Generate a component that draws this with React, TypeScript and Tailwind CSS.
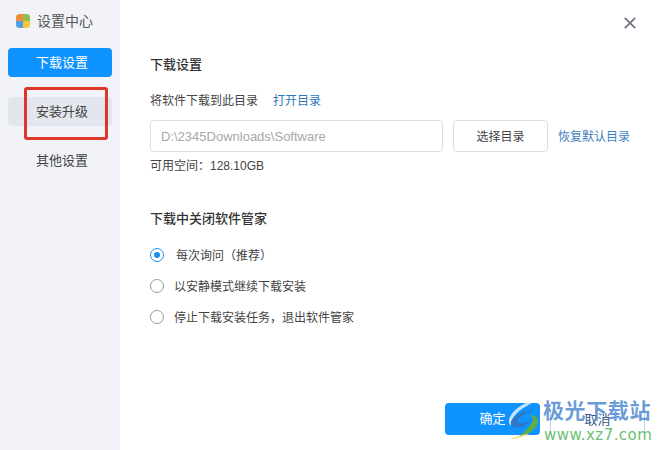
function Radio({ checked, label, gap }: { checked?: boolean; label: string; gap: string }) {
  return (
    <div className={`flex items-center h-[16px] ${gap}`}>
      {checked ? (
        <span className="w-[14px] h-[14px] rounded-full border border-[#1b8ff0] flex items-center justify-center shrink-0">
          <span className="w-[6px] h-[6px] rounded-full bg-[#1b8ff0]" />
        </span>
      ) : (
        <span className="w-[14px] h-[14px] rounded-full border border-[#9a9a9a] shrink-0" />
      )}
      <span className="text-[12px] text-[#444] pt-[2px]">{label}</span>
    </div>
  );
}

export default function App() {
  return (
    <div className="relative w-[660px] h-[450px] flex overflow-hidden bg-white font-['Liberation_Sans','Noto_Sans_CJK_SC',sans-serif]">
      <div className="w-[120px] shrink-0 bg-[#f1f3f9] px-[8px] pt-[12px]">
        <div className="flex items-center h-[16px] pl-[8px] gap-[7px]">
          <svg width="14" height="14" viewBox="0 0 14 14" className="mt-[2px]">
            <defs>
              <clipPath id="logo-clip">
                <rect width="14" height="14" rx="3.5" />
              </clipPath>
            </defs>
            <g clipPath="url(#logo-clip)">
              <rect width="7" height="7" fill="#f08a3c" />
              <rect x="7" width="7" height="7" fill="#8cc152" />
              <rect y="7" width="7" height="7" fill="#4aa3e8" />
              <rect x="7" y="7" width="7" height="7" fill="#f8c63d" />
            </g>
          </svg>
          <span className="text-[14px] text-[#555] pt-[2px] whitespace-nowrap">设置中心</span>
        </div>
        <div className="mt-[20px] flex flex-col gap-[20px]">
          <div className="h-[29px] pt-[1px] pl-[4px] rounded-[4px] bg-[#0f93ff] text-white text-[13px] flex items-center justify-center">下载设置</div>
          <div className="h-[29px] pt-[1px] pl-[4px] rounded-[4px] bg-[#e3e6ec] text-[#444] text-[13px] flex items-center justify-center">安装升级</div>
          <div className="h-[29px] pt-[1px] pl-[4px] text-[#444] text-[13px] flex items-center justify-center">其他设置</div>
        </div>
      </div>

      <div className="flex-1 pl-[30px] pt-[57px]">
        <div className="text-[13px] leading-[16px] font-medium text-[#333]">下载设置</div>
        <div className="mt-[20px] flex items-center h-[16px] text-[12px]">
          <span className="text-[#444]">将软件下载到此目录</span>
          <span className="ml-[15px] text-[#2a78b8]">打开目录</span>
        </div>
        <div className="mt-[11px] flex items-center">
          <div className="w-[293px] h-[32px] pt-[1px] rounded-[4px] border border-[#dcdcdc] pl-[10px] flex items-center text-[13px] text-[#a8a8a8]">D:\2345Downloads\Software</div>
          <div className="ml-[10px] w-[95px] h-[32px] pt-[1px] rounded-[4px] border border-[#dcdcdc] flex items-center justify-center text-[12px] text-[#444]">选择目录</div>
          <span className="ml-[10px] pt-[2px] text-[12px] text-[#3f7fc4]">恢复默认目录</span>
        </div>
        <div className="mt-[6px] h-[16px] flex items-center text-[12px] text-[#444]">可用空间：128.10GB</div>
        <div className="mt-[37px] text-[13px] leading-[16px] font-medium text-[#333]">下载中关闭软件管家</div>
        <div className="mt-[20px] flex flex-col gap-[15px]">
          <Radio checked label="每次询问（推荐）" gap="gap-[12px]" />
          <Radio label="以安静模式继续下载安装" gap="gap-[10px]" />
          <Radio label="停止下载安装任务，退出软件管家" gap="gap-[10px]" />
        </div>
      </div>

      <svg className="absolute left-[624px] top-[17px]" width="12" height="12" viewBox="0 0 12 12">
        <path d="M0.8 0.8 L11.2 11.2 M11.2 0.8 L0.8 11.2" stroke="#6f7383" strokeWidth="1.8" />
      </svg>

      <div className="absolute left-[24px] top-[87px] w-[84px] h-[53px] rounded-[3px] border-[3px] border-[#e0352b]" />

      <div className="absolute left-[445px] top-[403px] w-[95px] h-[32px] rounded-[4px] bg-[#0f93ff] text-white text-[13px] flex items-center justify-center">确定</div>
      <div className="absolute left-[550px] top-[411px] w-[95px] h-[24px] pb-[7px] border-x border-[#c3d0df] text-[#33568a] text-[13px] flex items-center justify-center">取消</div>

      {/* watermark */}
      <svg className="absolute left-[505px] top-[398px]" width="40" height="42" viewBox="0 0 40 42">
        <path d="M32 2 C22 3 9 10 5 19 C3 23 4 26 6 28 C5 22 11 14 20 9 C24 7 28 4 32 2Z" fill="#ffffff" fillOpacity="0.75" />
        <path d="M30 12 C20 12 8 17 6 24 C5 29 11 31 17 29 C22 27 25 24 26 21 C22 25 15 27 13 24 C11 20 20 15 30 12Z" fill="#2f76c4" />
        <path d="M14 38 C24 37 33 30 33 23 C33 19 29 17 25 17 C28 19 29 22 26 26 C23 31 18 35 14 38Z" fill="#5fae45" />
        <path d="M4 41 C11 41 19 39 24 35 C18 37 11 39 4 41Z" fill="#efdf86" />
      </svg>
      <div className="absolute left-[543px] top-[399px] text-[21px] leading-[24px] font-bold tracking-[0.6px] text-[#4f8ad0]/85 whitespace-nowrap">极光下载站</div>
      <div className="absolute left-[544px] top-[427px] text-[15px] leading-[16px] tracking-[0.45px] text-[#6cbf73] whitespace-nowrap font-['DejaVu_Sans',sans-serif]">www.xz7.com</div>
    </div>
  );
}
